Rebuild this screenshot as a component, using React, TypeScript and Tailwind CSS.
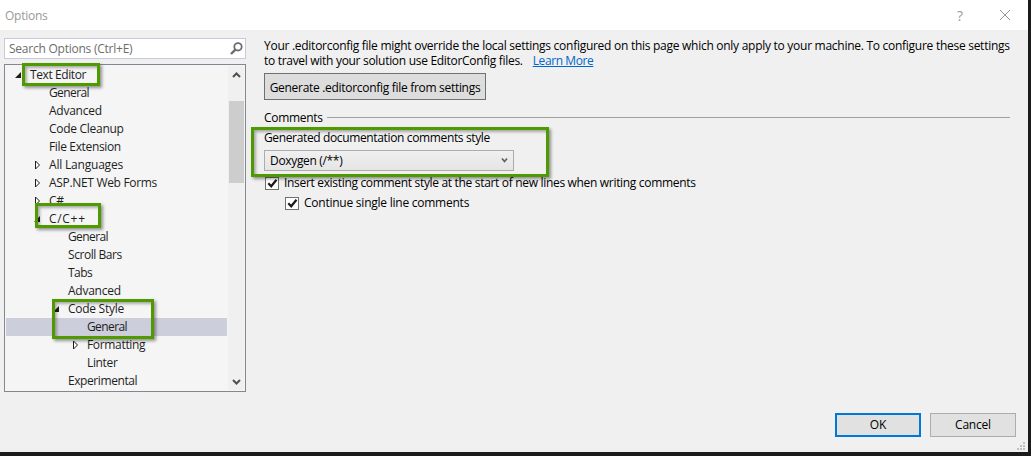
import React from "react";

type Arrow = "open" | "closed" | null;
type Item = { label: string; level: 0 | 1 | 2 | 3; arrow?: Arrow; selected?: boolean; tracking: string };

const items: Item[] = [
  { label: "Text Editor", level: 0, arrow: "open", tracking: "tracking-[-0.4px]" },
  { label: "General", level: 1, tracking: "tracking-[-0.6px]" },
  { label: "Advanced", level: 1, tracking: "tracking-[-0.25px]" },
  { label: "Code Cleanup", level: 1, tracking: "tracking-[-0.28px]" },
  { label: "File Extension", level: 1, tracking: "tracking-[-0.35px]" },
  { label: "All Languages", level: 1, arrow: "closed", tracking: "tracking-[-0.2px]" },
  { label: "ASP.NET Web Forms", level: 1, arrow: "closed", tracking: "tracking-[-0.32px]" },
  { label: "C#", level: 1, arrow: "closed", tracking: "tracking-[-0.2px]" },
  { label: "C/C++", level: 1, arrow: "open", tracking: "tracking-[0.7px]" },
  { label: "General", level: 2, tracking: "tracking-[-0.6px]" },
  { label: "Scroll Bars", level: 2, tracking: "tracking-[-0.45px]" },
  { label: "Tabs", level: 2, tracking: "tracking-[-0.5px]" },
  { label: "Advanced", level: 2, tracking: "tracking-[-0.25px]" },
  { label: "Code Style", level: 2, arrow: "open", tracking: "tracking-[-0.27px]" },
  { label: "General", level: 3, selected: true, tracking: "tracking-[-0.6px]" },
  { label: "Formatting", level: 3, arrow: "closed", tracking: "tracking-[-0.33px]" },
  { label: "Linter", level: 3, tracking: "tracking-[-0.35px]" },
  { label: "Experimental", level: 2, tracking: "tracking-[-0.42px]" },
];

const indent = { 0: "pl-[7px]", 1: "pl-[26px]", 2: "pl-[45px]", 3: "pl-[64px]" };

function TreeArrow({ kind }: { kind?: Arrow }) {
  return (
    <svg className="mr-[7px] h-[10px] w-[10px] shrink-0" viewBox="0 0 10 10">
      {kind === "open" && <path d="M8 2v6H2z" fill="#1e1e1e" />}
      {kind === "closed" && <path d="M3.5 1v8L7.5 5z" fill="#fff" stroke="#1e1e1e" />}
    </svg>
  );
}

function Check() {
  return (
    <span className="mt-[2px] flex h-[13px] w-[14px] shrink-0 items-center justify-center border border-[#707070] bg-white">
      <svg className="h-[11px] w-[11px]" viewBox="0 0 11 11">
        <path d="M1.3 5.2 4.2 8.3 9.5 1.7" fill="none" stroke="#1a1a1a" strokeWidth="2.2" />
      </svg>
    </span>
  );
}

function Highlight({ className }: { className: string }) {
  return (
    <div className={"pointer-events-none absolute border-[3px] border-[#4f9a00] shadow-[2px_2px_3px_rgba(0,0,0,0.4),inset_2px_2px_3px_rgba(0,0,0,0.3)] " + className} />
  );
}

export default function App() {
  return (
    <div className="relative h-[456px] w-[1031px] overflow-hidden bg-[#1b1b1c] pr-[3px] pb-[4px] font-['Open_Sans',sans-serif] text-[12px] leading-[15px] whitespace-nowrap text-black">
      <div className="flex h-full flex-col bg-[#f0f0f0]">
        <header className="flex h-[30px] shrink-0 items-center bg-white pl-[5px] text-[#999]">
          <span className="grow tracking-[-0.25px]">Options</span>
          <span className="mr-[36px] text-[14px]">?</span>
          <svg className="mr-[17px] h-[12px] w-[12px]" viewBox="0 0 12 12">
            <path d="M1 1l10 10M11 1L1 11" stroke="#999" fill="none" />
          </svg>
        </header>

        <div className="flex grow">
          <aside className="ml-[4px] w-[242px] shrink-0 pt-[8px]">
            <div className="flex h-[21px] items-center border border-[#c8cadc] bg-white pl-[4px] text-[#6d6d6d]">
              <span className="grow tracking-[-0.24px]">Search Options (Ctrl+E)</span>
              <svg className="mr-[2px] h-[13px] w-[13px]" viewBox="0 0 13 13">
                <circle cx="8" cy="4.8" r="3.7" fill="none" stroke="#6d6d6d" strokeWidth="1.8" />
                <path d="M5.4 7.6 1 12" stroke="#6d6d6d" strokeWidth="2.4" />
              </svg>
            </div>
            <div className="mt-[5px] flex h-[328px] border border-[#828790] bg-[#f5f5f5] p-px">
              <ul className="w-[221px] text-[#1e1e1e]">
                {items.map((it, i) => (
                  <li
                    key={i}
                    className={"flex h-[18px] items-center " + indent[it.level] + (it.selected ? " bg-[#cccedb]" : "")}
                  >
                    <TreeArrow kind={it.arrow} />
                    <span className={"pb-px " + it.tracking}>{it.label}</span>
                  </li>
                ))}
              </ul>
              <div className="ml-px flex w-[16px] flex-col items-center bg-[#f0f0f0]">
                <svg className="h-[17px] w-[15px]" viewBox="0 0 15 17">
                  <path d="M4 11l3.5-3.5L11 11" fill="none" stroke="#505050" strokeWidth="2" />
                </svg>
                <div className="mt-[18px] h-[82px] w-[15px] bg-[#cdcdcd]" />
                <svg className="mt-auto h-[17px] w-[15px]" viewBox="0 0 15 17">
                  <path d="M4 7l3.5 3.5L11 7" fill="none" stroke="#505050" strokeWidth="2" />
                </svg>
              </div>
            </div>
          </aside>

          <main className="ml-[18px] flex w-[746px] flex-col pt-[8px]">
            <p className="tracking-[-0.272px]">
              Your .editorconfig file might override the local settings configured on this page which only apply to your machine. To configure these settings
            </p>
            <p className="tracking-[-0.3px]">
              to travel with your solution use EditorConfig files.
              <a className="ml-[10px] tracking-[-0.4px] text-[#0066cc] underline">Learn More</a>
            </p>
            <button className="mt-[5px] flex h-[27px] w-[222px] items-center justify-center border border-[#707070] bg-[#ddd]">
              <span className="pt-px tracking-[-0.3px]">Generate .editorconfig file from settings</span>
            </button>
            <div className="mt-[10px] flex items-center">
              <span className="w-[63px] tracking-[-0.3px]">Comments</span>
              <span className="h-px grow bg-[#a0a0a0]" />
            </div>
            <p className="mt-[5px] tracking-[-0.36px]">Generated documentation comments style</p>
            <div className="mt-[5px] flex h-[21px] w-[250px] items-center border border-[#acacac] bg-gradient-to-b from-[#f0f0f0] to-[#e5e5e5] pl-[5px]">
              <span className="grow tracking-[-0.33px]">Doxygen (/**)</span>
              <svg className="mr-[5px] h-[7px] w-[7px]" viewBox="0 0 7 7">
                <path d="M1 1.5l2.5 3L6 1.5" fill="none" stroke="#606060" strokeWidth="1.7" />
              </svg>
            </div>
            <label className="mt-[4px] ml-px flex items-center gap-[5px]">
              <Check />
              <span className="tracking-[-0.32px]">Insert existing comment style at the start of new lines when writing comments</span>
            </label>
            <label className="mt-[5px] ml-[21px] flex items-center gap-[5px]">
              <Check />
              <span className="tracking-[-0.24px]">Continue single line comments</span>
            </label>
            <div className="mt-auto mr-[-6px] mb-[15px] flex justify-end gap-[9px]">
              <button className="h-[24px] w-[86px] border-2 border-[#0078d7] bg-[#e1e1e1] pb-px">OK</button>
              <button className="h-[24px] w-[86px] border border-[#adadad] bg-[#e1e1e1] pb-px tracking-[-0.2px]">Cancel</button>
            </div>
          </main>
        </div>
      </div>

      <svg className="absolute right-[6px] bottom-[6px] h-[8px] w-[8px]" viewBox="0 0 8 8" fill="#bfbfbf">
        <path d="M6 0h2v2H6zM3 3h2v2H3zM6 3h2v2H6zM0 6h2v2H0zM3 6h2v2H3zM6 6h2v2H6z" />
      </svg>
      <Highlight className="top-[63px] left-[22px] h-[23px] w-[78px]" />
      <Highlight className="top-[203px] left-[35px] h-[25px] w-[66px]" />
      <Highlight className="top-[299px] left-[52px] h-[40px] w-[102px]" />
      <Highlight className="top-[127px] left-[251px] h-[50px] w-[298px]" />
    </div>
  );
}
